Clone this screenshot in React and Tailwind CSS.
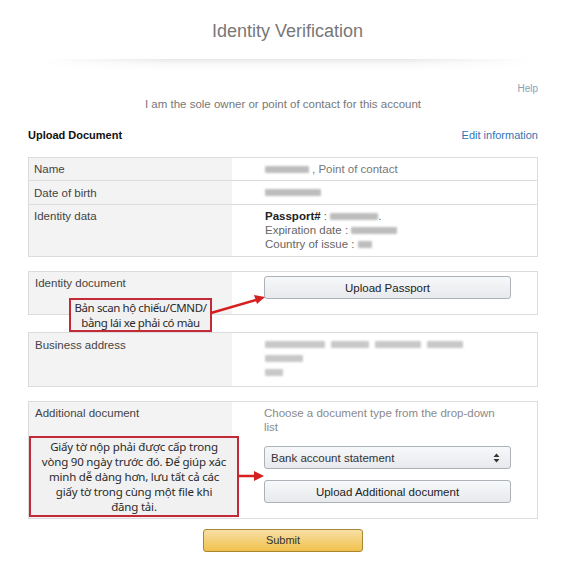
import React from "react";

// blurred-out personal data
function Blur({ w, shade = "bg-[#bdbdbd]" }) {
  return (
    <span
      className={`inline-block h-[7px] ${shade} blur-[1.3px] align-middle rounded-[1px]`}
      style={{ width: w }}
    />
  );
}

function GrayButton({ children, className = "" }) {
  return (
    <div
      className={`h-[23px] w-[247px] flex items-center justify-center rounded-[3px] border border-[#adb1b8] bg-[linear-gradient(to_bottom,#f7f8fa,#e7e9ec)] text-[#222] ${className}`}
    >
      {children}
    </div>
  );
}

export default function App() {
  return (
    <div className="relative w-[575px] min-h-[576px] bg-white font-['Liberation_Sans',Arial,sans-serif] text-[11.5px] text-[#444]">
      <div className="pt-[20px] text-center text-[18px] leading-[22px] text-[#777]">
        Identity Verification
      </div>

      {/* shadow divider */}
      <div className="mt-[17px] mx-[43px] h-[12px] bg-[linear-gradient(to_bottom,rgba(0,0,0,0.09),rgba(0,0,0,0.03)_4px,transparent)] [mask-image:linear-gradient(to_right,transparent,black_25%,black_75%,transparent)]" />

      <div className="mx-[28px] w-[510px]">
        <div className="mt-[12px] text-right text-[10px] leading-[12px] text-[#8aa0b5]">
          Help
        </div>
        <div className="mt-[2px] text-center leading-[14px] text-[#777]">
          I am the sole owner or point of contact for this account
        </div>

        <div className="mt-[17px] flex justify-between leading-[14px]">
          <span className="font-bold text-[11px] text-[#111]">Upload Document</span>
          <span className="text-[11px] text-[#3474b4]">Edit information</span>
        </div>

        {/* personal data table */}
        <div className="mt-[15px] border border-[#dcdcdc]">
          <div className="grid grid-cols-[203px_1fr] h-[23px] border-b border-[#dcdcdc] leading-[14px]">
            <div className="bg-[#f3f3f3] pl-[5px] flex items-center">Name</div>
            <div className="pl-[33px] flex items-center gap-[3px] text-[#777]">
              <Blur w={44} /> <span>, Point of contact</span>
            </div>
          </div>
          <div className="grid grid-cols-[203px_1fr] h-[24px] border-b border-[#dcdcdc] leading-[14px]">
            <div className="bg-[#f3f3f3] pl-[5px] flex items-center">Date of birth</div>
            <div className="pl-[33px] flex items-center">
              <Blur w={56} />
            </div>
          </div>
          <div className="grid grid-cols-[203px_1fr] h-[51px] leading-[14px]">
            <div className="bg-[#f3f3f3] pl-[5px] pt-[4px]">Identity data</div>
            <div className="pl-[33px] pt-[4px] text-[#666]">
              <div>
                <span className="font-bold text-[#222]">Passport#</span> : <Blur w={48} />.
              </div>
              <div>
                Expiration date : <Blur w={46} />
              </div>
              <div>
                Country of issue : <Blur w={14} />
              </div>
            </div>
          </div>
        </div>

        {/* identity document */}
        <div className="mt-[14px] border border-[#dcdcdc] grid grid-cols-[203px_1fr] h-[44px] leading-[14px]">
          <div className="bg-[#f3f3f3] pl-[6px] pt-[4px]">Identity document</div>
          <div className="pl-[32px] pt-[4px]">
            <GrayButton>Upload Passport</GrayButton>
          </div>
        </div>

        {/* business address */}
        <div className="mt-[17px] border border-[#dcdcdc] grid grid-cols-[203px_1fr] h-[55px] leading-[14px]">
          <div className="bg-[#f3f3f3] pl-[6px] pt-[5px]">Business address</div>
          <div className="pl-[33px] pt-[4px] flex flex-col">
            <div className="h-[14px] flex items-center gap-[6px]">
              <Blur w={60} shade="bg-[#c8c8c8]" />
              <Blur w={38} shade="bg-[#c8c8c8]" />
              <Blur w={46} shade="bg-[#c8c8c8]" />
              <Blur w={36} shade="bg-[#c8c8c8]" />
            </div>
            <div className="h-[14px] flex items-center">
              <Blur w={38} shade="bg-[#c8c8c8]" />
            </div>
            <div className="h-[14px] flex items-center">
              <Blur w={18} shade="bg-[#c8c8c8]" />
            </div>
          </div>
        </div>

        {/* additional document */}
        <div className="mt-[14px] border border-[#dcdcdc] grid grid-cols-[203px_1fr] h-[118px] leading-[14px]">
          <div className="bg-[#f3f3f3] pl-[6px] pt-[4px]">Additional document</div>
          <div className="pl-[32px] pt-[4px]">
            <div className="w-[240px] text-[#8a8a8a]">
              Choose a document type from the drop-down list
            </div>
            <div className="mt-[12px] h-[23px] w-[247px] flex items-center justify-between px-[6px] rounded-[3px] border border-[#adb1b8] bg-[linear-gradient(to_bottom,#f7f8fa,#e7e9ec)] text-[#333]">
              <span>Bank account statement</span>
              <svg width="7" height="10" viewBox="0 0 7 10" className="mr-[4px]">
                <path d="M3.5 0.5 L6.5 4 H0.5 Z" fill="#333" />
                <path d="M3.5 9.5 L6.5 6 H0.5 Z" fill="#333" />
              </svg>
            </div>
            <GrayButton className="mt-[11px]">Upload Additional document</GrayButton>
          </div>
        </div>

        <div className="mt-[10px] mx-auto w-[160px] h-[23px] flex items-center justify-center rounded-[3px] border border-[#a88734] bg-[linear-gradient(to_bottom,#f7dfa5,#f0c14b)] text-[11px] text-[#333]">
          Submit
        </div>
      </div>

      {/* annotations */}
      <div className="absolute left-[69px] top-[298px] w-[143px] h-[34px] border-2 border-[#c22a38] bg-[#f1f1f1] flex flex-col items-center justify-center whitespace-nowrap font-['Noto_Sans',sans-serif] text-[11.5px] leading-[15px] text-[#2a2a2a] tracking-[-0.4px]">
        <span>Bản scan hộ chiếu/CMND/</span>
        <span>bằng lái xe phải có màu</span>
      </div>
      <div className="absolute left-[29px] top-[436px] w-[210px] h-[81px] border-2 border-[#c22a38] bg-[#f1f1f1] flex flex-col items-center justify-center text-center whitespace-nowrap font-['Noto_Sans',sans-serif] text-[11.5px] leading-[15px] text-[#2a2a2a] tracking-[-0.2px]">
        <span>Giấy tờ nộp phải được cấp trong</span>
        <span>vòng 90 ngày trước đó. Để giúp xác</span>
        <span>minh dễ dàng hơn, lưu tất cả các</span>
        <span>giấy tờ trong cùng một file khi</span>
        <span>đăng tải.</span>
      </div>

      <svg className="absolute left-0 top-0 pointer-events-none" width="575" height="576">
        <line x1="211" y1="313" x2="256" y2="300" stroke="#d62020" strokeWidth="2.5" />
        <polygon points="265,297 254,295 257,304" fill="#d62020" />
        <line x1="238" y1="476" x2="255" y2="476" stroke="#d62020" strokeWidth="2.5" />
        <polygon points="264,476 254,471 254,481" fill="#d62020" />
      </svg>
    </div>
  );
}
